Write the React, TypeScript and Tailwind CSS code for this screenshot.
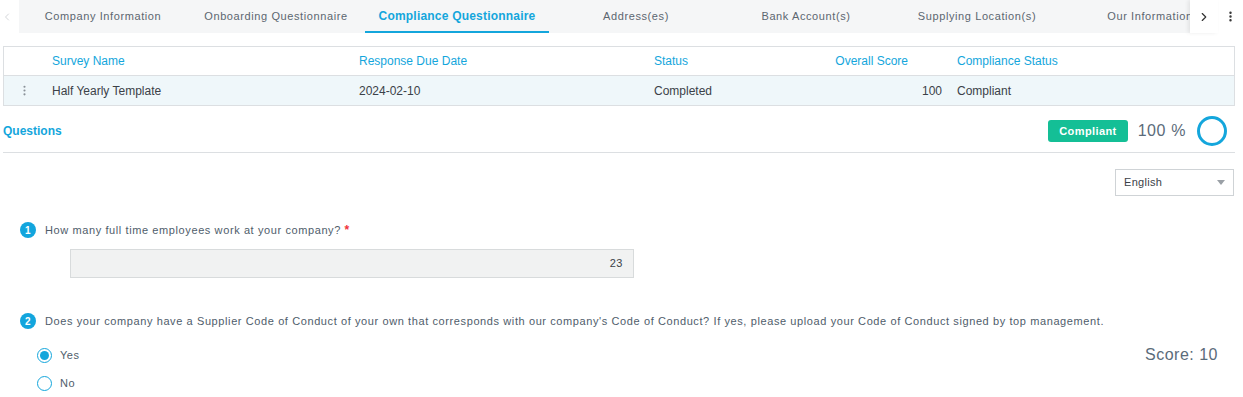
import { ChevronLeft, ChevronRight, EllipsisVertical } from 'lucide-react';

const tabs = [
  { label: 'Company Information', w: 'w-[168px]' },
  { label: 'Onboarding Questionnaire', w: 'w-[178px]' },
  { label: 'Compliance Questionnaire', w: 'w-[184px]', active: true },
  { label: 'Address(es)', w: 'w-[174px]' },
  { label: 'Bank Account(s)', w: 'w-[166px]' },
  { label: 'Supplying Location(s)', w: 'w-[176px]' },
  { label: 'Our Information', w: 'w-[170px]' },
];

function Radio({ checked, label }: { checked?: boolean; label: string }) {
  return (
    <label className="flex items-center gap-[8px] h-[28px]">
      <span className="w-[15px] h-[15px] rounded-full border border-[#14a6dc] flex items-center justify-center">
        {checked && <span className="w-[9px] h-[9px] rounded-full bg-[#14a6dc]" />}
      </span>
      <span className="text-[11px] tracking-[0.5px] text-[#4f5d6b]">{label}</span>
    </label>
  );
}

function QNum({ n }: { n: number }) {
  return (
    <span className="w-[16px] h-[16px] rounded-full bg-[#12a5dd] text-white text-[10px] font-bold flex items-center justify-center shrink-0">
      {n}
    </span>
  );
}

export default function App() {
  return (
    <div className="w-[1243px] h-[397px] bg-white overflow-hidden font-['Liberation_Sans',Arial,sans-serif]">
      {/* tab strip */}
      <div className="flex h-[33px]">
        <div className="w-[19px] flex items-center justify-start pl-[1px] text-[#c5c8cc]">
          <ChevronLeft size={12} strokeWidth={1.5} />
        </div>
        <div className="flex-1 flex bg-[#f5f6f7] overflow-hidden">
          {tabs.map((t) => (
            <div
              key={t.label}
              className={`${t.w} shrink-0 flex items-center justify-center whitespace-nowrap ${
                t.active
                  ? 'text-[12px] font-bold text-[#14a6dc] border-b-2 border-[#14a6dc] tracking-[0.2px]'
                  : 'text-[11px] text-[#5c6670] tracking-[0.6px]'
              }`}
            >
              {t.label}
            </div>
          ))}
        </div>
        <div className="w-[28px] bg-white flex items-center justify-center shadow-[-2px_0_4px_rgba(0,0,0,0.08)] text-[#333]">
          <ChevronRight size={14} strokeWidth={2} />
        </div>
        <div className="w-[25px] flex items-center justify-center text-[#333]">
          <EllipsisVertical size={13} strokeWidth={2.5} />
        </div>
      </div>

      {/* survey table */}
      <div className="mt-[13px] mx-[3px] w-[1232px] border border-[#dcdfe2] text-[12px]">
        <div className="flex items-center h-[29px] border-b border-[#dcdfe2] text-[#14a6dc]">
          <div className="w-[48px]" />
          <div className="w-[307px]">Survey Name</div>
          <div className="w-[295px]">Response Due Date</div>
          <div className="w-[150px]">Status</div>
          <div className="w-[104px] text-right">Overall Score</div>
          <div className="pl-[49px]">Compliance Status</div>
        </div>
        <div className="flex items-center h-[29px] bg-[#eff7fa] text-[#3b4148]">
          <div className="w-[48px] flex justify-start pl-[14px] text-[#8a9198]">
            <EllipsisVertical size={13} strokeWidth={2} />
          </div>
          <div className="w-[307px]">Half Yearly Template</div>
          <div className="w-[295px]">2024-02-10</div>
          <div className="w-[150px]">Completed</div>
          <div className="w-[138px] text-right">100</div>
          <div className="pl-[15px]">Compliant</div>
        </div>
      </div>

      {/* questions header */}
      <div className="mx-[3px] w-[1232px] h-[47px] pt-[4px] border-b border-[#dcdfe2] flex items-center justify-between">
        <div className="text-[12px] font-bold text-[#14a6dc]">Questions</div>
        <div className="flex items-center">
          <span className="h-[22px] px-[11px] rounded-[3px] bg-[#14bf96] text-white text-[11px] font-bold flex items-center tracking-[0.4px]">
            Compliant
          </span>
          <span className="ml-[10px] text-[16px] text-[#5b6b7a] tracking-[0.6px]">100 %</span>
          <span className="ml-[11px] mr-[8px] w-[30px] h-[30px] rounded-full border-[3px] border-[#14a6dc]" />
        </div>
      </div>

      {/* language */}
      <div className="flex justify-end pr-[9px] mt-[16px]">
        <div className="w-[119px] h-[27px] border border-[#cfd3d6] flex items-center justify-between pl-[8px] pr-[8px]">
          <span className="text-[11px] text-[#3b4148] tracking-[0.3px]">English</span>
          <span className="w-0 h-0 border-l-[4px] border-r-[4px] border-t-[5px] border-l-transparent border-r-transparent border-t-[#9aa0a6]" />
        </div>
      </div>

      {/* question 1 */}
      <div className="pl-[20px] mt-[26px]">
        <div className="flex items-center gap-[9px] h-[16px] text-[11px] tracking-[0.6px] text-[#4f5d6b]">
          <QNum n={1} />
          <span>
            How many full time employees work at your company?{' '}
            <span className="text-[#f0323a] text-[12px] font-bold">*</span>
          </span>
        </div>
        <div className="ml-[50px] mt-[11px] w-[564px] h-[29px] bg-[#f1f2f2] border border-[#d8dbdc] flex items-center justify-end pr-[10px] text-[11px] text-[#3b4148] tracking-[0.5px]">
          23
        </div>
      </div>

      {/* question 2 */}
      <div className="pl-[20px] mt-[35px]">
        <div className="flex items-center gap-[9px] h-[16px] text-[11px] tracking-[0.6px] text-[#4f5d6b] whitespace-nowrap">
          <QNum n={2} />
          <span>
            Does your company have a Supplier Code of Conduct of your own that corresponds with our company's Code of Conduct? If yes, please upload your Code of Conduct signed by top management.
          </span>
        </div>
        <div className="flex justify-between mt-[12px] pl-[17px] pr-[25px]">
          <div className="flex flex-col">
            <Radio checked label="Yes" />
            <Radio label="No" />
          </div>
          <div className="text-[16px] text-[#5b6b7a] tracking-[0.5px] h-[28px] flex items-center">Score: 10</div>
        </div>
      </div>
    </div>
  );
}
